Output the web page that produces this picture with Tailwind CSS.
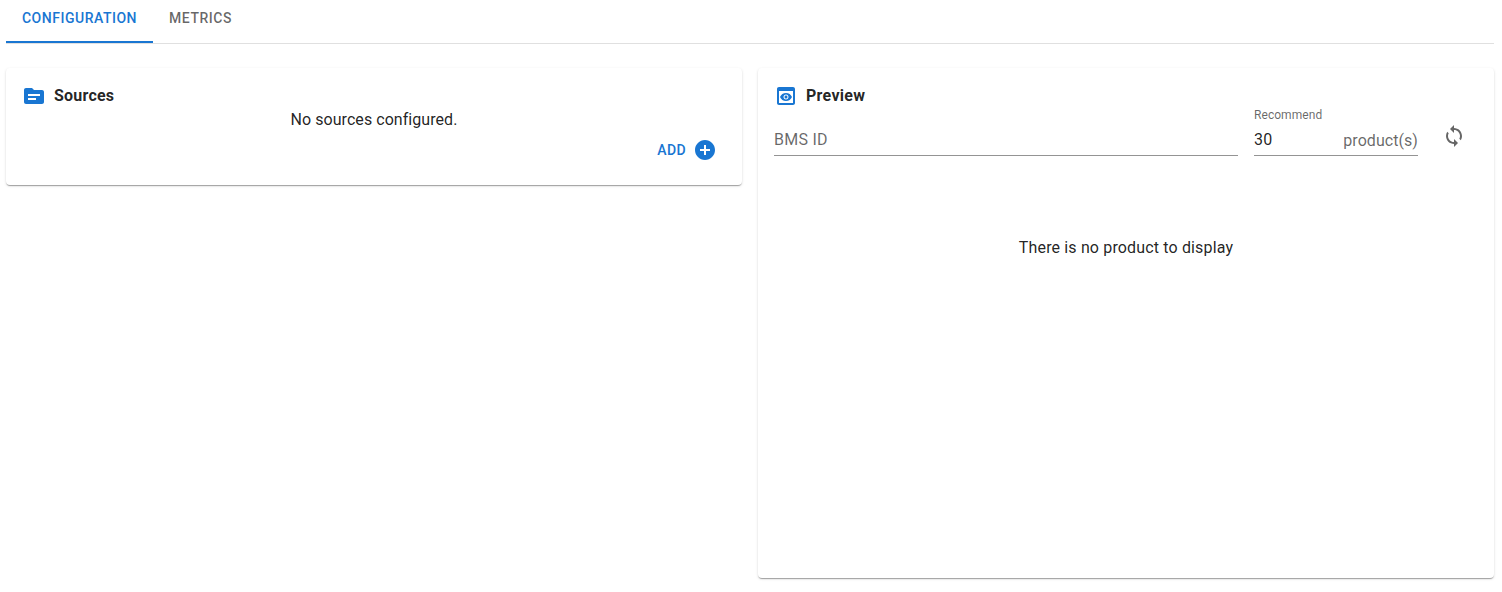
<!DOCTYPE html>
<html lang="en"><head><meta charset="utf-8"><title>Configuration</title>
<script src="https://cdn.jsdelivr.net/npm/@tailwindcss/browser@4"></script></head>
<body class="bg-white font-['Roboto',sans-serif] text-base leading-6 tracking-[0.15px] text-black/87 h-[592px] overflow-hidden px-1.5">
<nav class="flex h-11 w-[1488px] border-b border-black/12 text-sm font-medium tracking-[0.52px] leading-[17.5px]">
<button class="h-[43px] w-[147px] border-b-2 border-[#1976d2] pb-1 text-[#1976d2]">CONFIGURATION</button>
<button class="h-[43px] w-[95px] pb-1.5 text-black/60">METRICS</button>
</nav>
<main class="mt-6 flex w-[1488px] items-start gap-4">
<section class="h-[117px] w-[736px] rounded bg-white px-4 pt-4 shadow-[0_2px_1px_-1px_rgba(0,0,0,0.2),0_1px_1px_rgba(0,0,0,0.14),0_1px_3px_rgba(0,0,0,0.12)]">
<h2 class="flex h-6 items-center gap-2 font-bold tracking-[0.22px]"><svg class="size-6 fill-[#1976d2]" viewBox="0 0 24 24"><path d="M20 6h-8l-2-2H4c-1.1 0-1.99.9-1.99 2L2 18c0 1.1.9 2 2 2h16c1.1 0 2-.9 2-2V8c0-1.1-.9-2-2-2zm-6 10H6v-2h8v2zm4-4H6v-2h12v2z"/></svg>Sources</h2>
<p class="text-center tracking-[0.06px]">No sources configured.</p>
<div class="flex justify-end pr-[9px]"><button class="flex h-9 items-center gap-[7px] text-sm font-medium tracking-[0.4px] text-[#1976d2]">ADD<svg class="size-6 fill-current" viewBox="0 0 24 24"><path d="M12 2C6.48 2 2 6.48 2 12s4.48 10 10 10 10-4.48 10-10S17.52 2 12 2zm5 11h-4v4h-2v-4H7v-2h4V7h2v4h4v2z"/></svg></button></div>
</section>
<section class="h-[510px] w-[736px] rounded bg-white px-4 pt-4 shadow-[0_2px_1px_-1px_rgba(0,0,0,0.2),0_1px_1px_rgba(0,0,0,0.14),0_1px_3px_rgba(0,0,0,0.12)]">
<h2 class="flex h-6 items-center gap-2 font-bold tracking-[0.28px]"><svg class="size-6 fill-[#1976d2]" viewBox="0 0 24 24"><path d="M19 3H5c-1.11 0-2 .9-2 2v14c0 1.1.89 2 2 2h14c1.1 0 2-.9 2-2V5c0-1.1-.89-2-2-2zm0 16H5V7h14v12zm-5.5-6c0 .83-.67 1.5-1.5 1.5s-1.5-.67-1.5-1.5.67-1.5 1.5-1.5 1.5.67 1.5 1.5zM12 9c-2.73 0-5.06 1.66-6 4 .94 2.34 3.27 4 6 4s5.06-1.66 6-4c-.94-2.34-3.27-4-6-4zm0 6.5c-1.38 0-2.5-1.12-2.5-2.5s1.12-2.5 2.5-2.5 2.5 1.12 2.5 2.5-1.12 2.5-2.5 2.5z"/></svg>Preview</h2>
<div class="flex h-12 gap-4">
<div class="flex w-[464px] items-end border-b border-black/42 pb-[3px] tracking-[0.25px] text-black/60">BMS ID</div>
<div class="w-[164px] border-b border-black/42"><div class="h-5 text-xs leading-[14px] tracking-[0.06px] text-black/60">Recommend</div><div class="flex justify-between"><span>30</span><span class="pt-px tracking-[0.06px] text-black/60">product(s)</span></div></div>
<button class="flex h-12 w-10 items-center justify-center pt-2"><svg class="size-6 fill-black/60" viewBox="0 0 24 24"><path d="M12 4V1L8 5l4 4V6c3.31 0 6 2.69 6 6 0 1.01-.25 1.97-.7 2.8l1.46 1.46C19.54 15.03 20 13.57 20 12c0-4.42-3.58-8-8-8zm0 14c-3.31 0-6-2.69-6-6 0-1.01.25-1.97.7-2.8L5.24 7.74C4.46 8.97 4 10.43 4 12c0 4.42 3.58 8 8 8v3l4-4-4-4v3z"/></svg></button>
</div>
<p class="mt-20 text-center">There is no product to display</p>
</section>
</main>
</body></html>
